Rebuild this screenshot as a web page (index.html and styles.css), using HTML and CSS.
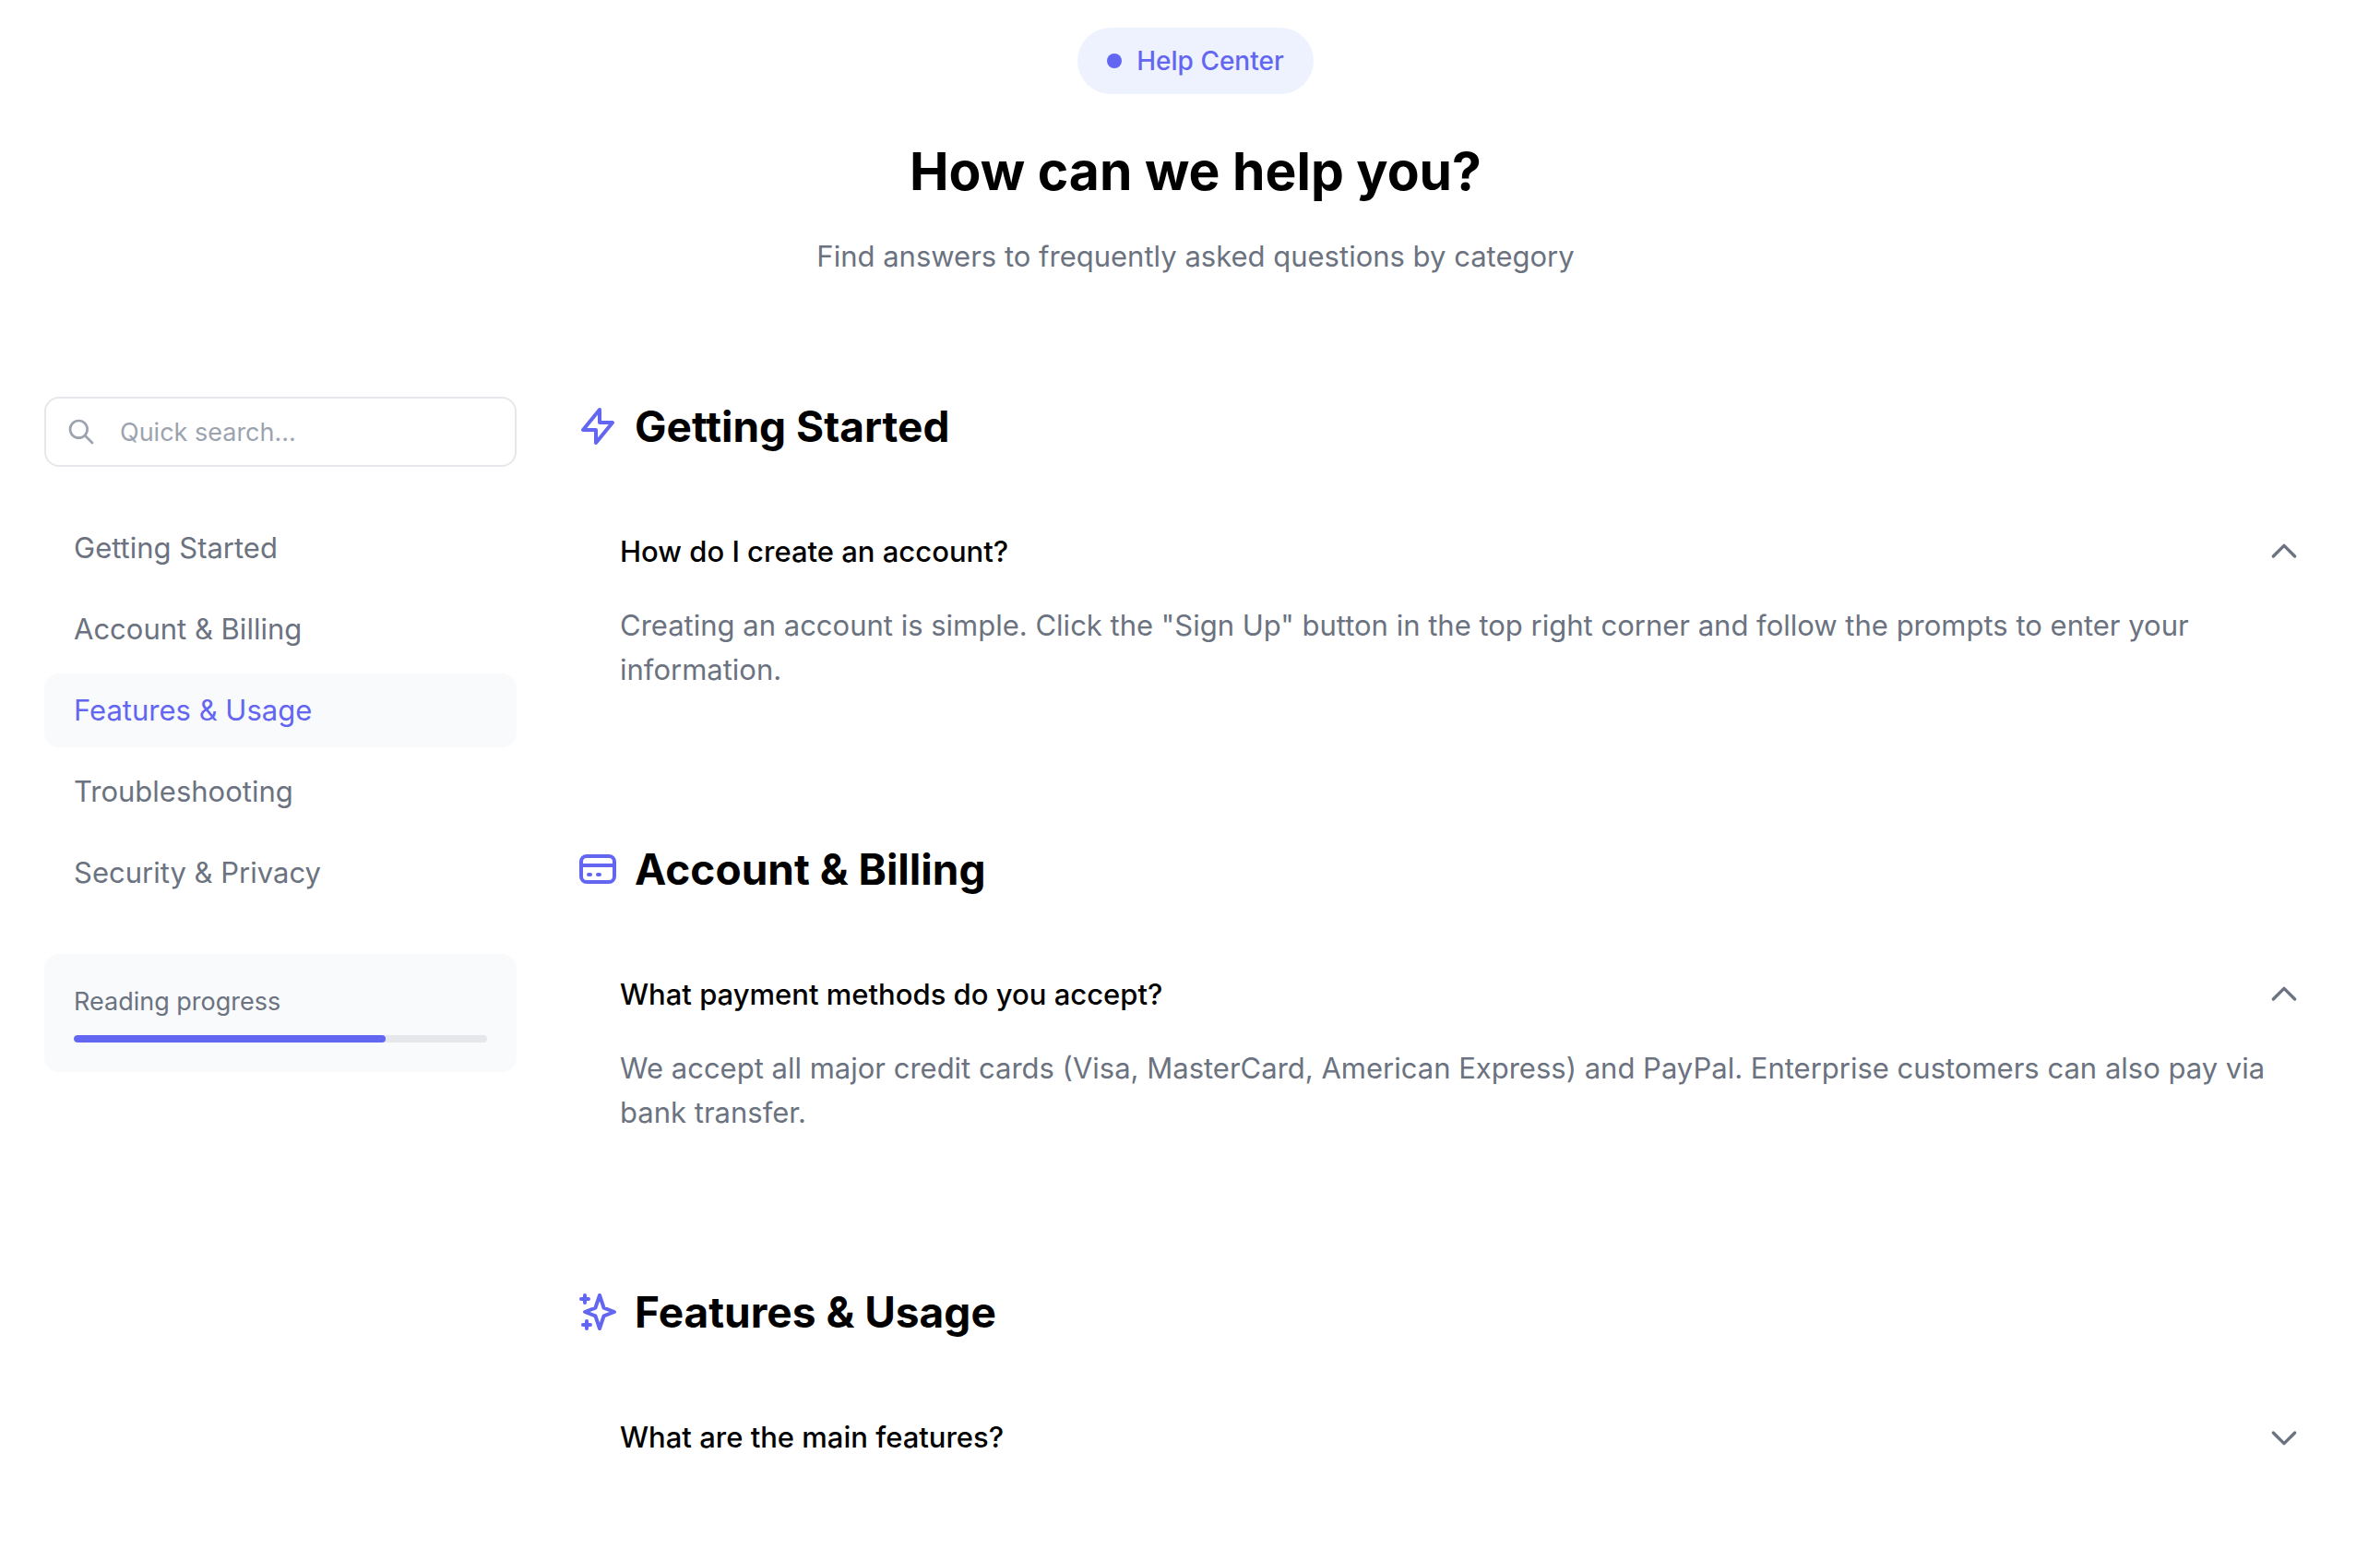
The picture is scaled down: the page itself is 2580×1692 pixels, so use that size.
FILE: index.html
```html
<!DOCTYPE html>
<html lang="en">

<head>
    <meta charset="UTF-8">
    <meta name="viewport" content="width=device-width, initial-scale=1.0">
    <title>Help Center</title>
    <link rel="stylesheet" href="styles.css">
</head>

<body>
    <header class="page-header">
        <span class="badge"><span class="badge-dot"></span>Help Center</span>
        <h1>How can we help you?</h1>
        <p>Find answers to frequently asked questions by category</p>
    </header>

    <div class="layout">
        <aside class="sidebar">
            <div class="search">
                <svg class="search-icon" viewBox="0 0 24 24" aria-hidden="true">
                    <path d="M21 21l-6-6m2-5a7 7 0 11-14 0 7 7 0 0114 0z" />
                </svg>
                <input type="text" id="search-input" aria-label="Quick search" placeholder="Quick search...">
            </div>

            <nav class="navigation">
                <a href="#getting-started">Getting Started</a>
                <a href="#billing">Account &amp; Billing</a>
                <a href="#features" class="active">Features &amp; Usage</a>
                <a href="#troubleshooting">Troubleshooting</a>
                <a href="#security">Security &amp; Privacy</a>
            </nav>

            <div class="progress-card">
                <label for="reading-progress">Reading progress</label>
                <progress id="reading-progress" value="75.5" max="100"></progress>
            </div>
        </aside>

        <main class="content">
            <section id="getting-started">
                <h2>
                    <svg class="section-icon" viewBox="0 0 24 24" aria-hidden="true">
                        <path d="M13 10V3L4 14h7v7l9-11h-7z" />
                    </svg>
                    Getting Started
                </h2>
                <div class="faq-item">
                    <button type="button" class="question" aria-expanded="true" aria-controls="answer-account">
                        How do I create an account?
                        <svg class="chevron" viewBox="0 0 24 24" aria-hidden="true">
                            <path d="M19 9l-7 7-7-7" />
                        </svg>
                    </button>
                    <p class="answer" id="answer-account">Creating an account is simple. Click the "Sign Up" button in the top right corner and follow the prompts to enter your information.</p>
                </div>
            </section>

            <section id="billing">
                <h2>
                    <svg class="section-icon" viewBox="0 0 24 24" aria-hidden="true">
                        <path d="M3 10h18M7 15h1m4 0h1m-7 4h12a3 3 0 003-3V8a3 3 0 00-3-3H6a3 3 0 00-3 3v8a3 3 0 003 3z" />
                    </svg>
                    Account &amp; Billing
                </h2>
                <div class="faq-item">
                    <button type="button" class="question" aria-expanded="true" aria-controls="answer-payment">
                        What payment methods do you accept?
                        <svg class="chevron" viewBox="0 0 24 24" aria-hidden="true">
                            <path d="M19 9l-7 7-7-7" />
                        </svg>
                    </button>
                    <p class="answer" id="answer-payment">We accept all major credit cards (Visa, MasterCard, American Express) and PayPal. Enterprise customers can also pay via bank transfer.</p>
                </div>
            </section>

            <section id="features">
                <h2>
                    <svg class="section-icon" viewBox="0 0 24 24" aria-hidden="true">
                        <path d="M5 3v4M3 5h4M6 17v4m-2-2h4m5-16l2.286 6.857L21 12l-5.714 2.143L13 21l-2.286-6.857L5 12l5.714-2.143L13 3z" />
                    </svg>
                    Features &amp; Usage
                </h2>
                <div class="faq-item">
                    <button type="button" class="question" aria-expanded="false">
                        What are the main features?
                        <svg class="chevron" viewBox="0 0 24 24" aria-hidden="true">
                            <path d="M19 9l-7 7-7-7" />
                        </svg>
                    </button>
                </div>
            </section>
        </main>
    </div>
</body>

</html>
```
FILE: styles.css
```css
* {
    box-sizing: border-box;
}

body {
    font-family: 'Inter', sans-serif;
    font-size: 31px;
    line-height: 48px;
    color: #000;
    background-color: #fff;
    margin: 0;
    padding: 30px 36px 0 48px;
}

h1, h2, p {
    margin: 0;
}

svg {
    fill: none;
    stroke: currentColor;
    stroke-width: 2;
    stroke-linecap: round;
    stroke-linejoin: round;
    flex-shrink: 0;
}

.page-header {
    display: flex;
    flex-direction: column;
    align-items: center;
    text-align: center;
    margin-bottom: 128px;
}

.badge {
    display: flex;
    align-items: center;
    gap: 16px;
    padding: 16px 32px;
    border-radius: 36px;
    font-size: 28px;
    line-height: 40px;
    font-weight: 500;
    color: #6366f1;
    background-color: #eef2ff;
}

.badge-dot {
    width: 16px;
    height: 16px;
    border-radius: 50%;
    background-color: #6366f1;
}

.page-header h1 {
    font-size: 57px;
    line-height: 72px;
    font-weight: 700;
    margin: 48px 0 32px;
}

.page-header p {
    color: #6b7280;
}

.layout {
    display: grid;
    grid-template-columns: 512px 1fr;
    gap: 64px;
    align-items: start;
}

/* Sidebar */
.sidebar {
    display: flex;
    flex-direction: column;
    gap: 48px;
}

.search {
    position: relative;
}

.search-icon {
    position: absolute;
    left: 24px;
    top: 22px;
    width: 32px;
    height: 32px;
    color: #9ca3af;
}

#search-input {
    display: block;
    width: 100%;
    height: 76px;
    padding: 16px 32px 16px 80px;
    border: 2px solid #e5e7eb;
    border-radius: 16px;
    background-color: #fff;
    font-family: inherit;
    font-size: 27px;
    outline: none;
}

#search-input::placeholder {
    color: #9ca3af;
}

.navigation {
    display: flex;
    flex-direction: column;
    gap: 8px;
}

.navigation a {
    padding: 16px 32px;
    border-radius: 16px;
    color: #6b7280;
    text-decoration: none;
}

.navigation a.active {
    color: #6366f1;
    background-color: #f9fafb;
}

.progress-card {
    display: flex;
    flex-direction: column;
    gap: 16px;
    padding: 32px;
    border-radius: 16px;
    font-size: 27px;
    line-height: 40px;
    color: #6b7280;
    background-color: #f9fafb;
}

.progress-card progress {
    display: block;
    appearance: none;
    -webkit-appearance: none;
    width: 100%;
    height: 8px;
    border: none;
    border-radius: 4px;
    overflow: hidden;
    background-color: #e5e7eb;
}

.progress-card progress::-webkit-progress-bar {
    background-color: #e5e7eb;
}

.progress-card progress::-webkit-progress-value {
    border-radius: 4px;
    background-color: #6366f1;
}

/* Questions */
.content {
    display: flex;
    flex-direction: column;
    gap: 128px;
}

.content h2 {
    display: flex;
    align-items: center;
    gap: 16px;
    font-size: 46px;
    line-height: 64px;
    font-weight: 700;
    margin-bottom: 48px;
}

.section-icon {
    width: 48px;
    height: 48px;
    color: #6366f1;
}

.faq-item {
    padding: 32px 48px;
}

.question {
    display: flex;
    justify-content: space-between;
    align-items: center;
    width: 100%;
    padding: 0;
    border: none;
    background: none;
    font: inherit;
    font-weight: 500;
    color: #000;
    text-align: left;
    cursor: pointer;
}

.chevron {
    width: 40px;
    height: 40px;
    color: #6b7280;
}

.question[aria-expanded="true"] .chevron {
    transform: rotate(180deg);
}

.answer {
    margin-top: 32px;
    color: #6b7280;
}
```
